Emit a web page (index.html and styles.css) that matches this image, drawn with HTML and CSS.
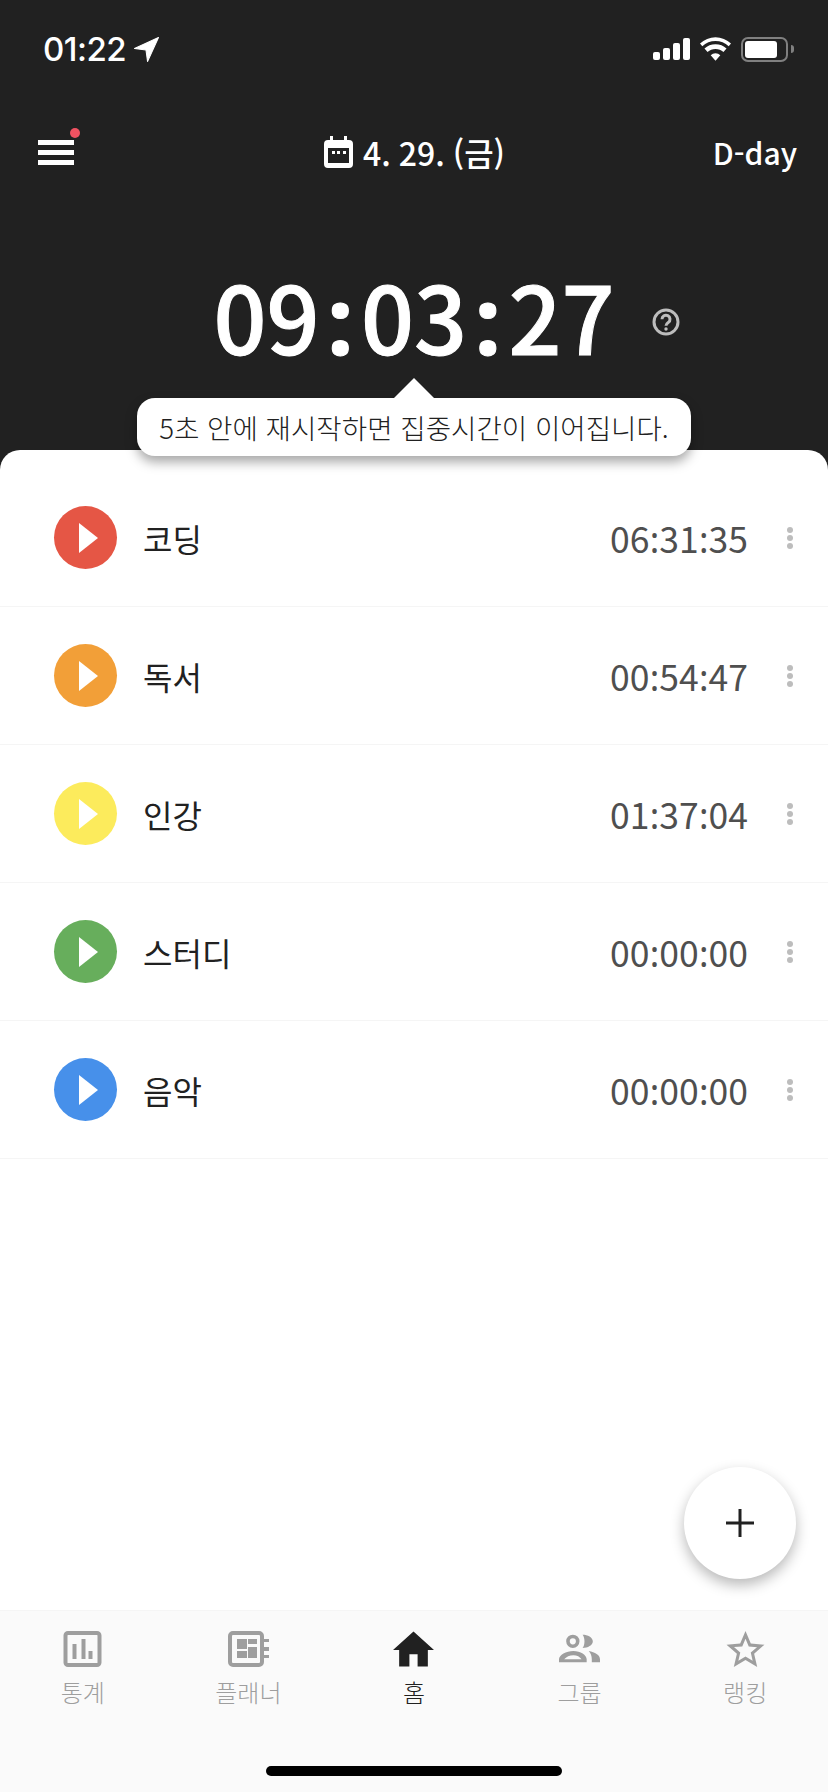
FILE: index.html
```html
<!DOCTYPE html>
<html lang="ko">
<head>
    <meta charset="UTF-8">
    <meta name="viewport" content="width=device-width, initial-scale=1.0">
    <title>타이머</title>
    <link rel="stylesheet" href="styles.css">
</head>
<body>
    <div class="phone">
        <div class="status-bar">
            <div class="status-time">
                <span>01:22</span>
                <svg class="status-arrow" viewBox="0 0 24 24"><path d="M23.500.5.500 11l11 1.500 1.500 11z" fill="#fff" stroke="#fff" stroke-width="1" stroke-linejoin="round"/></svg>
            </div>
            <div class="status-icons">
                <div class="signal"><i></i><i></i><i></i><i></i></div>
                <svg class="wifi" viewBox="0 0 32 24"><path d="M16 24l-5-5.600a7.200 7.200 0 0 1 10 0zM7.800 15.200 4.600 11.600a16.600 16.600 0 0 1 22.800 0l-3.200 3.600a11.900 11.900 0 0 0-16.400 0zM2.400 9.200 0 6.400a23 23 0 0 1 32 0l-2.400 2.800a19.400 19.400 0 0 0-27.200 0z" fill="#fff"/></svg>
                <div class="battery"><div class="battery-fill"></div></div>
                <div class="battery-nub"></div>
            </div>
        </div>

        <div class="top-bar">
            <div class="menu-btn">
                <span></span><span></span><span></span>
                <div class="menu-dot"></div>
            </div>
            <div class="date">
                <svg class="calendar" viewBox="0 0 29 32">
                    <path d="M6 0h3v4h11V0h3v4h2a4 4 0 0 1 4 4v20a4 4 0 0 1-4 4H4a4 4 0 0 1-4-4V8a4 4 0 0 1 4-4h2zM4 12v15h21V12z" fill="#fff" fill-rule="evenodd"/>
                    <path d="M8 15h3v3H8zM13 15h3v3h-3zM19 15h3v3h-3z" fill="#fff"/>
                </svg>
                <span>4. 29. (금)</span>
            </div>
            <div class="dday">D-day</div>
        </div>

        <div class="timer-area">
            <div class="timer">09<span class="colon">:</span>03<span class="colon">:</span>27</div>
            <svg class="help" viewBox="0 0 28 28">
                <circle cx="14" cy="14" r="12" fill="none" stroke="#bdbdbd" stroke-width="3"/>
                <path d="M10 11.200a4 4 0 1 1 6.400 3.200c-1.500 1.100-2.400 1.700-2.400 3.400" fill="none" stroke="#bdbdbd" stroke-width="3"/>
                <circle cx="14" cy="21" r="1.700" fill="#bdbdbd"/>
            </svg>
        </div>

        <div class="sheet">
            <div class="tooltip">5초 안에 재시작하면 집중시간이 이어집니다.</div>

            <div class="subject-row">
                <div class="play red"><div class="play-tri"></div></div>
                <div class="subject-name">코딩</div>
                <div class="subject-time">06<span class="colon">:</span>31<span class="colon">:</span>35</div>
                <div class="more"><i></i><i></i><i></i></div>
            </div>
            <div class="subject-row">
                <div class="play orange"><div class="play-tri"></div></div>
                <div class="subject-name">독서</div>
                <div class="subject-time">00<span class="colon">:</span>54<span class="colon">:</span>47</div>
                <div class="more"><i></i><i></i><i></i></div>
            </div>
            <div class="subject-row">
                <div class="play yellow"><div class="play-tri"></div></div>
                <div class="subject-name">인강</div>
                <div class="subject-time">01<span class="colon">:</span>37<span class="colon">:</span>04</div>
                <div class="more"><i></i><i></i><i></i></div>
            </div>
            <div class="subject-row">
                <div class="play green"><div class="play-tri"></div></div>
                <div class="subject-name">스터디</div>
                <div class="subject-time">00<span class="colon">:</span>00<span class="colon">:</span>00</div>
                <div class="more"><i></i><i></i><i></i></div>
            </div>
            <div class="subject-row">
                <div class="play blue"><div class="play-tri"></div></div>
                <div class="subject-name">음악</div>
                <div class="subject-time">00<span class="colon">:</span>00<span class="colon">:</span>00</div>
                <div class="more"><i></i><i></i><i></i></div>
            </div>

            <div class="fab">
                <svg viewBox="0 0 28 28"><path d="M12.500 0h3v12.500H28v3H15.500V28h-3V15.500H0v-3h12.500z" fill="#212121"/></svg>
            </div>
        </div>

        <div class="tab-bar">
            <div class="tab">
                <svg class="tab-icon" viewBox="0 0 38 36">
                    <rect x="2" y="2" width="34" height="32" rx="2.500" fill="none" stroke="#9e9e9e" stroke-width="4"/>
                    <path d="M9 13h4v15H9zM18 8h4v20h-4zM25 20h4v8h-4z" fill="#9e9e9e"/>
                </svg>
                <div class="tab-label">통계</div>
            </div>
            <div class="tab">
                <svg class="tab-icon" viewBox="0 0 41 36">
                    <rect x="2" y="2" width="32" height="32" rx="3" fill="none" stroke="#9e9e9e" stroke-width="4"/>
                    <path d="M9 8h10v10H9zM9 20h10v7H9zM20 8h9v5h-9zM20 16h9v11h-9z" fill="#9e9e9e"/>
                    <path d="M35 8h6v3h-6zM35 16h6v4h-6zM35 24h6v3h-6z" fill="#9e9e9e"/>
                </svg>
                <div class="tab-label">플래너</div>
            </div>
            <div class="tab active">
                <svg class="tab-icon" viewBox="2 3 20 17"><path d="M10 20v-6h4v6h5v-8h3L12 3 2 12h3v8z" fill="#212121"/></svg>
                <div class="tab-label">홈</div>
            </div>
            <div class="tab">
                <svg class="tab-icon" viewBox="0 0 40 28">
                    <path d="M13.500 0a6.500 6.500 0 1 1 0 13 6.500 6.500 0 0 1 0-13zm0 3.500a3 3 0 1 0 0 6 3 3 0 0 0 0-6zM0 27v-3c0-4 7-8 14-8s13 4 13 8v3zm5-3h17c-1.500-2.500-4.500-4-8-4s-7 1.500-9 4z" fill="#9e9e9e" fill-rule="evenodd"/>
                    <path d="M23 0c5 0 10 2.500 10 6.500S28 13 23 13c2.500-3 2.500-10 0-13zM29 16c6 1 11 4 11 8v3h-8v-3c0-3-1-6-3-8z" fill="#9e9e9e"/>
                </svg>
                <div class="tab-label">그룹</div>
            </div>
            <div class="tab">
                <svg class="tab-icon" viewBox="2 2 20 19"><path d="M22 9.240l-7.190-.62L12 2 9.190 8.630 2 9.240l5.460 4.730L5.820 21 12 17.270 18.180 21l-1.630-7.030L22 9.240zM12 15.400l-3.760 2.270 1-4.280-3.320-2.880 4.380-.38L12 6.100l1.710 4.040 4.380.38-3.320 2.880 1 4.280L12 15.400z" fill="#9e9e9e"/></svg>
                <div class="tab-label">랭킹</div>
            </div>
            <div class="home-indicator"></div>
        </div>
    </div>
</body>
</html>
```
FILE: styles.css
```css
/* --- 기본 --- */
* {
    box-sizing: border-box;
}

body {
    margin: 0;
    font-family: "Noto Sans CJK KR", "Noto Sans", sans-serif;
    background-color: #fff;
}

.phone {
    width: 828px;
    height: 1792px;
    display: flex;
    flex-direction: column;
    background-color: #212121;
    overflow: hidden;
}

/* --- 상태바 --- */
.status-bar {
    height: 117px;
    padding: 30px 34px 0 43px;
    display: flex;
    justify-content: space-between;
    align-items: flex-start;
    color: #fff;
}

.status-time {
    display: flex;
    align-items: center;
    gap: 8px;
    height: 38px;
    font-family: Inter, "Liberation Sans", sans-serif;
    font-size: 33px;
    font-weight: 500;
    letter-spacing: -0.5px;
}

.status-arrow {
    width: 25px;
    height: 25px;
}

.status-icons {
    display: flex;
    align-items: center;
    height: 38px;
}

.signal {
    display: flex;
    align-items: flex-end;
    gap: 3px;
    height: 22px;
    margin-right: 10px;
}

.signal i {
    display: block;
    width: 7px;
    border-radius: 2px;
    background-color: #fff;
}

.signal i:nth-child(1) { height: 8px; }
.signal i:nth-child(2) { height: 12px; }
.signal i:nth-child(3) { height: 17px; }
.signal i:nth-child(4) { height: 22px; }

.wifi {
    width: 31px;
    height: 24px;
    margin-right: 10px;
}

.battery {
    width: 47px;
    height: 25px;
    padding: 2px;
    border: 2px solid #808080;
    border-radius: 7px;
}

.battery-fill {
    width: 32px;
    height: 100%;
    border-radius: 3px;
    background-color: #fff;
}

.battery-nub {
    width: 3px;
    height: 8px;
    margin-left: 3px;
    border-radius: 0 3px 3px 0;
    background-color: #808080;
}

/* --- 상단 메뉴 --- */
.top-bar {
    height: 70px;
    padding: 0 31px 0 38px;
    display: grid;
    grid-template-columns: 1fr auto 1fr;
    align-items: center;
    color: #fff;
}

.menu-btn {
    position: relative;
    width: 36px;
    display: flex;
    flex-direction: column;
    gap: 5px;
}

.menu-btn span {
    display: block;
    height: 5px;
    background-color: #fff;
}

.menu-dot {
    position: absolute;
    top: -12px;
    right: -6px;
    width: 10px;
    height: 10px;
    border-radius: 50%;
    background-color: #ef5261;
}

.date {
    display: flex;
    align-items: center;
    gap: 10px;
    margin-right: 6px;
    font-size: 32px;
    font-weight: 500;
    word-spacing: -1px;
}

.calendar {
    width: 29px;
    height: 32px;
}

.dday {
    text-align: right;
    font-size: 30px;
    font-weight: 500;
}

/* --- 타이머 --- */
.timer-area {
    height: 263px;
    padding-top: 73px;
    display: flex;
    align-items: flex-start;
    justify-content: center;
    position: relative;
    color: #fff;
}

.timer {
    font-size: 93px;
    font-weight: 500;
    line-height: 110px;
    -webkit-text-stroke: 1px #fff;
}

.timer .colon {
    width: 41.5px;
    font-weight: 700;
}

/* 숫자 사이 콜론이 위로 올라가서 글꼴을 따로 지정 */
.colon {
    display: inline-block;
    width: 0.278em;
    text-align: center;
    font-family: "Noto Sans", sans-serif;
}

.help {
    position: absolute;
    left: 652px;
    top: 121px;
    width: 28px;
    height: 28px;
}

/* --- 과목 목록 --- */
.sheet {
    flex: 1;
    position: relative;
    padding-top: 19px;
    border-radius: 20px 20px 0 0;
    background-color: #fff;
}

.tooltip {
    position: absolute;
    left: 137px;
    top: -52px;
    width: 554px;
    height: 58px;
    display: flex;
    align-items: center;
    justify-content: center;
    border-radius: 18px;
    background-color: #fff;
    box-shadow: 0 6px 12px rgba(0, 0, 0, 0.35);
    color: #212121;
    font-size: 27.6px;
    font-weight: 300;
    white-space: nowrap;
}

.tooltip::before {
    content: "";
    position: absolute;
    left: 257px;
    top: -20px;
    border-left: 20px solid transparent;
    border-right: 20px solid transparent;
    border-bottom: 20px solid #fff;
}

.subject-row {
    height: 138px;
    padding: 0 35px 0 54px;
    display: flex;
    align-items: center;
    border-bottom: 1px solid #f5f5f5;
}

.play {
    width: 63px;
    height: 63px;
    display: flex;
    align-items: center;
    padding-left: 25px;
    border-radius: 50%;
}

.play-tri {
    border-top: 15px solid transparent;
    border-bottom: 15px solid transparent;
    border-left: 19px solid #fff;
}

.red { background-color: #e55645; }
.orange { background-color: #f29f38; }
.yellow { background-color: #fceb5c; }
.green { background-color: #67ae5c; }
.blue { background-color: #4790ea; }

.subject-name {
    flex: 1;
    margin-left: 26px;
    font-size: 32px;
    color: #212121;
}

.subject-time {
    font-size: 35.5px;
    color: #4f4f4f;
}

.more {
    display: flex;
    flex-direction: column;
    gap: 2px;
    margin-left: 39px;
}

.more i {
    display: block;
    width: 6px;
    height: 6px;
    border-radius: 50%;
    background-color: #bdbdbd;
}

.fab {
    position: absolute;
    right: 32px;
    bottom: 31px;
    width: 112px;
    height: 112px;
    display: flex;
    align-items: center;
    justify-content: center;
    border-radius: 50%;
    background-color: #fff;
    box-shadow: 0 6px 14px rgba(0, 0, 0, 0.28);
}

.fab svg {
    width: 28px;
    height: 28px;
}

/* --- 하단 탭 --- */
.tab-bar {
    height: 182px;
    position: relative;
    display: grid;
    grid-template-columns: repeat(5, 1fr);
    align-items: start;
    padding-top: 20px;
    background-color: #fafafa;
    border-top: 1px solid #f5f5f5;
}

.tab {
    display: flex;
    flex-direction: column;
    align-items: center;
    color: #9e9e9e;
}

.tab.active {
    color: #212121;
}

.tab-icon {
    height: 36px;
    width: 41px;
}

.tab-label {
    margin-top: 8px;
    font-size: 24px;
    font-weight: 300;
    line-height: 34px;
}

.home-indicator {
    position: absolute;
    left: 266px;
    bottom: 16px;
    width: 296px;
    height: 10px;
    border-radius: 5px;
    background-color: #000;
}
```
